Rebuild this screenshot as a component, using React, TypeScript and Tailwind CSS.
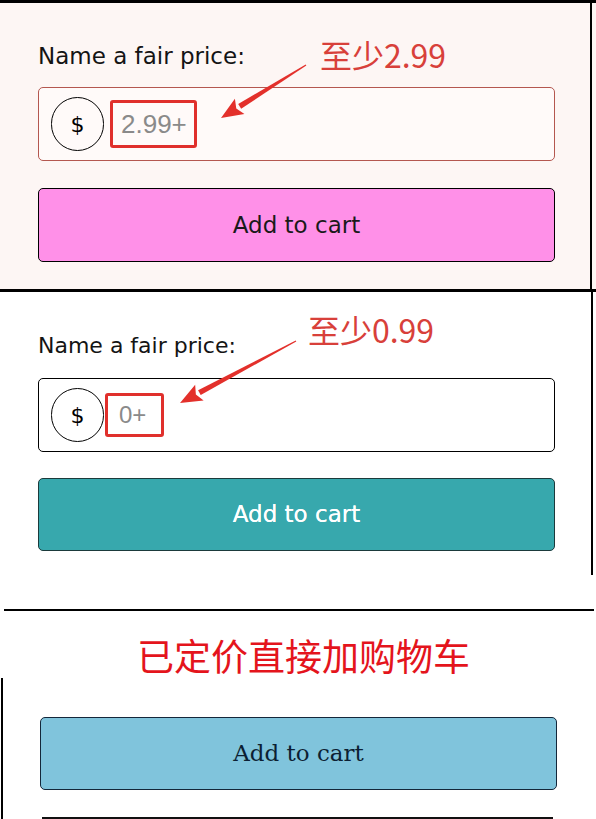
import React from "react"

const sans = "font-['DejaVu_Sans','Liberation_Sans',sans-serif]"
const cjk = "font-['Noto_Sans_CJK_SC','Noto_Sans',sans-serif]"

function Arrow({ x1, y1, x2, y2 }: { x1: number; y1: number; x2: number; y2: number }) {
  const dx = x2 - x1
  const dy = y2 - y1
  const len = Math.hypot(dx, dy)
  const ux = dx / len
  const uy = dy / len
  const px = -uy
  const py = ux
  const head = 22
  const bx = x2 - ux * head
  const by = y2 - uy * head
  const shaft = [
    [x1 + px * 0.6, y1 + py * 0.6],
    [bx + px * 2.8, by + py * 2.8],
    [bx - px * 2.8, by - py * 2.8],
    [x1 - px * 0.6, y1 - py * 0.6],
  ]
  const tip = [
    [x2, y2],
    [bx + px * 9, by + py * 9],
    [bx + ux * 4, by + uy * 4],
    [bx - px * 9, by - py * 9],
  ]
  const pts = (a: number[][]) => a.map((p) => p.join(",")).join(" ")
  return (
    <g fill="#e3302b">
      <polygon points={pts(shaft)} />
      <polygon points={pts(tip)} />
    </g>
  )
}

function PriceInput({
  border,
  bg,
  value,
  box,
  text,
}: {
  border: string
  bg: string
  value: string
  box: string
  text: string
}) {
  return (
    <div className={`flex items-center h-[74px] w-[517px] rounded-[5px] border pl-[12px] ${border} ${bg}`}>
      <div className="flex items-center justify-center w-[53px] h-[54px] rounded-full border border-black text-[22px] text-black">$</div>
      <div className={`flex items-center pl-[8px] border-[3px] border-[#e0302c] rounded-[3px] ${box}`}>
        <span className={`leading-none text-[#8a8a8a] font-['Liberation_Sans',sans-serif] ${text}`}>{value}</span>
      </div>
    </div>
  )
}

export default function App() {
  return (
    <div className={`relative w-[596px] h-[819px] overflow-hidden bg-white ${sans}`}>
      <div className="h-[3px] bg-black" />

      {/* first: pink shop */}
      <div className="flex h-[286px] bg-[#fdf6f4]">
        <div className="w-[590px] pl-[38px] pt-[35px]">
          <div className="flex items-start">
            <span className="mt-[7px] text-[23px] leading-none text-[#141414]">Name a fair price:</span>
            <span className={`ml-[75px] text-[32px] leading-none text-[#d8403a] ${cjk}`}>至少2.99</span>
          </div>
          <div className="mt-[17px]">
            <PriceInput
              border="border-[#b4574f]"
              bg="bg-[#fffaf9]"
              value="2.99+"
              box="ml-[6px] w-[87px] h-[48px]"
              text="text-[26px]"
            />
          </div>
          <button className="mt-[27px] w-[517px] h-[74px] rounded-[5px] border border-black bg-[#ff90e8] text-[23px] text-[#1a1a1a]">
            Add to cart
          </button>
        </div>
        <div className="w-[2px] bg-black" />
      </div>

      <div className="h-[3px] bg-black" />

      {/* second: teal shop */}
      <div className="flex h-[317px]">
        <div className="w-[591px] pl-[38px] pt-[21px]">
          <div className="flex items-start">
            <span className="mt-[22px] text-[22px] leading-none text-[#141414]">Name a fair price:</span>
            <span className={`ml-[72px] text-[32px] leading-none text-[#d8403a] ${cjk}`}>至少0.99</span>
          </div>
          <div className="mt-[21px]">
            <PriceInput
              border="border-black"
              bg="bg-white"
              value="0+"
              box="ml-[1px] w-[59px] h-[44px] pl-[11px]"
              text="text-[24px]"
            />
          </div>
          <button className="mt-[26px] w-[517px] h-[73px] rounded-[5px] border border-[#1b3a3b] bg-[#37a8ad] text-[23px] text-white [text-shadow:0_0_0.6px_#fff]">
            Add to cart
          </button>
        </div>
        <div className="w-[2px] h-[283px] bg-black" />
      </div>

      <div className="ml-[4px] w-[590px] h-[2px] bg-black" />

      {/* third: fixed price */}
      <div className="flex h-[208px]">
        <div className="ml-[1px] mt-[67px] w-[2px] bg-black" />
        <div className="flex-1">
          <div className={`ml-[134px] mt-[26px] text-[37px] leading-none text-[#e4141c] ${cjk}`}>已定价直接加购物车</div>
          <button className="ml-[37px] mt-[43px] w-[517px] h-[73px] rounded-[5px] border border-[#14273a] bg-[#80c4dc] text-[23px] text-[#0c1f33] font-['DejaVu_Serif','Liberation_Serif',serif]">
            Add to cart
          </button>
          <div className="ml-[39px] mt-[27px] w-[511px] h-[2px] bg-[#111]" />
        </div>
      </div>

      <svg className="absolute inset-0 pointer-events-none" width="596" height="819" viewBox="0 0 596 819">
        <Arrow x1={306} y1={65} x2={221} y2={118} />
        <Arrow x1={296} y1={341} x2={180} y2={403} />
      </svg>
    </div>
  )
}
